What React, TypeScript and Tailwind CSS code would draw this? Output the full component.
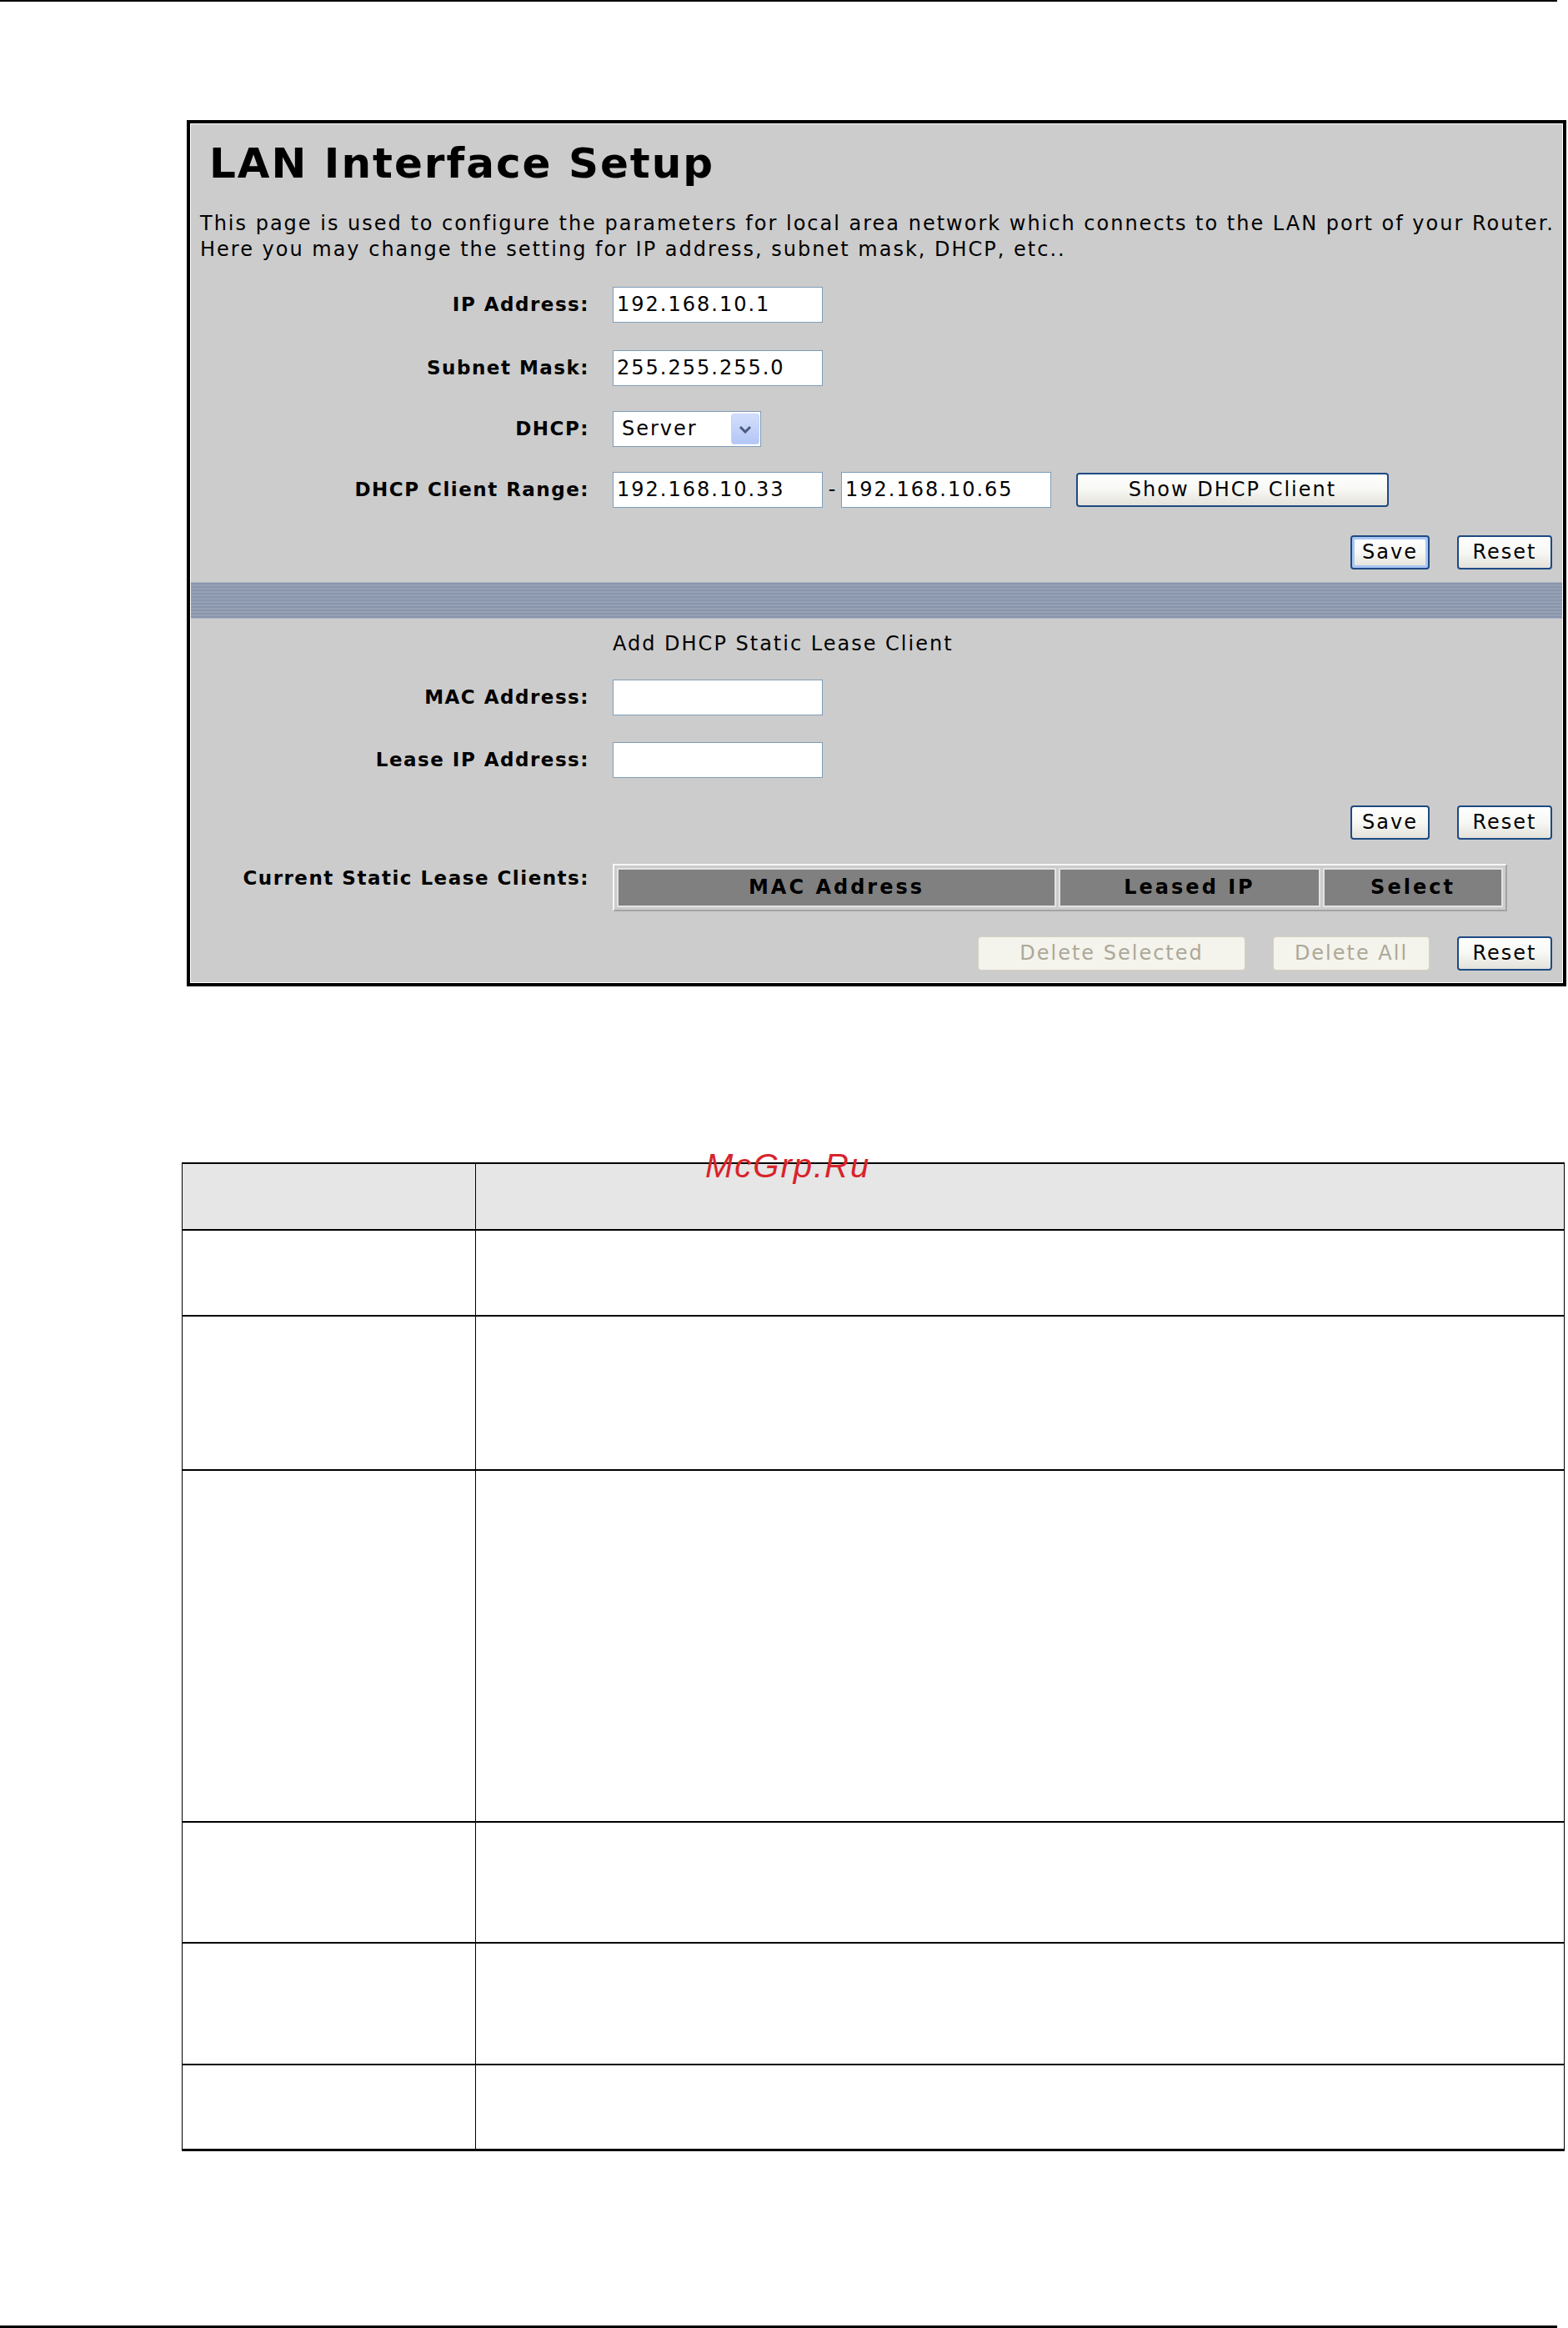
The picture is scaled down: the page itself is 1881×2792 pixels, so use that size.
import React from 'react';

const labelCls = "w-[478px] shrink-0 text-right text-[23px] font-bold tracking-[1.5px]";

function TextInput({ value, w = 'w-[252px]' }: { value?: string; w?: string }) {
  return (
    <div className={`${w} h-[43px] border border-[#7f9db9] bg-white pl-[4px] flex items-center tracking-[2px] text-black`}>
      {value}
    </div>
  );
}

function XpButton({
  label,
  w,
  isDefault,
  disabled,
}: {
  label: string;
  w: string;
  isDefault?: boolean;
  disabled?: boolean;
}) {
  if (disabled) {
    return (
      <div className={`${w} h-[41px] rounded-[4px] border border-[#d4d0c0] bg-[#f4f3ec] text-[#aca899] flex items-center justify-center tracking-[2px]`}>
        {label}
      </div>
    );
  }
  return (
    <div
      className={`${w} h-[41px] rounded-[4px] border-2 border-[#1d4a83] bg-gradient-to-b from-white via-[#f7f7f4] to-[#e3e2da] text-black flex items-center justify-center tracking-[2px] ${
        isDefault ? 'shadow-[inset_0_0_0_3px_#a9c6f3]' : ''
      }`}
    >
      {label}
    </div>
  );
}

function Row({ label, children, top }: { label: string; children: React.ReactNode; top: string }) {
  return (
    <div className={`flex items-center ${top}`}>
      <div className={labelCls}>{label}</div>
      <div className="ml-[28px] flex items-center">{children}</div>
    </div>
  );
}

function LanSetupPanel() {
  return (
    <div className="ml-[224px] w-[1655px] border-[4px] border-black">
      <div className="border border-white bg-[#cccccc] pb-[14px] text-[24px] leading-[31px] text-black">
        <h1 className="ml-[22px] mt-[17px] text-[50px] leading-[60px] font-bold tracking-[2px] text-black">
          LAN Interface Setup
        </h1>
        <p className="ml-[11px] mt-[27px] tracking-[2px]">
          This page is used to configure the parameters for local area network which connects to the LAN port of your Router.
          <br />
          Here you may change the setting for IP address, subnet mask, DHCP, etc..
        </p>

        <Row label="IP Address:" top="mt-[29px]">
          <TextInput value="192.168.10.1" />
        </Row>
        <Row label="Subnet Mask:" top="mt-[33px]">
          <TextInput value="255.255.255.0" />
        </Row>
        <Row label="DHCP:" top="mt-[30px]">
          <div className="w-[178px] h-[43px] border border-[#7f9db9] bg-white flex items-center justify-between pl-[10px] pr-[1px] tracking-[2px]">
            <span>Server</span>
            <div className="w-[34px] h-[37px] rounded-[3px] bg-gradient-to-b from-[#d3defc] to-[#b3c6f5] border border-[#c5d3f7] flex items-center justify-center">
              <svg width="16" height="10" viewBox="0 0 16 10">
                <path d="M2 2 L8 8 L14 2" fill="none" stroke="#4b5b80" strokeWidth="3" />
              </svg>
            </div>
          </div>
        </Row>
        <Row label="DHCP Client Range:" top="mt-[30px]">
          <TextInput value="192.168.10.33" />
          <span className="w-[22px] text-center">-</span>
          <TextInput value="192.168.10.65" />
          <div className="ml-[30px]">
            <XpButton label="Show DHCP Client" w="w-[375px]" />
          </div>
        </Row>

        <div className="mt-[33px] flex justify-end gap-[33px] pr-[12px]">
          <XpButton label="Save" w="w-[95px]" isDefault />
          <XpButton label="Reset" w="w-[114px]" />
        </div>

        <div className="mt-[15px] h-[44px] border-y border-[#adb5c4] bg-[repeating-linear-gradient(to_bottom,#8995ab_0px,#8995ab_2px,#96a1b5_2px,#96a1b5_4px)]" />

        <div className="mt-[15px] ml-[506px] tracking-[2px]">Add DHCP Static Lease Client</div>

        <Row label="MAC Address:" top="mt-[27px]">
          <TextInput />
        </Row>
        <Row label="Lease IP Address:" top="mt-[32px]">
          <TextInput />
        </Row>

        <div className="mt-[33px] flex justify-end gap-[33px] pr-[12px]">
          <XpButton label="Save" w="w-[95px]" />
          <XpButton label="Reset" w="w-[114px]" />
        </div>

        <div className="mt-[29px] flex items-start">
          <div className={`${labelCls} mt-[2px]`}>Current Static Lease Clients:</div>
          <div className="ml-[28px] w-[1073px] h-[57px] border-2 border-t-[#f6f6f6] border-l-[#f6f6f6] border-r-[#a3a3a3] border-b-[#a3a3a3] p-[3px] flex gap-[3px] font-bold tracking-[3px]">
            <div className="w-[527px] border-2 border-[#e2e2e2] bg-[#808080] flex items-center justify-center">MAC Address</div>
            <div className="w-[314px] border-2 border-[#e2e2e2] bg-[#808080] flex items-center justify-center">Leased IP</div>
            <div className="flex-1 border-2 border-[#e2e2e2] bg-[#808080] flex items-center justify-center">Select</div>
          </div>
        </div>

        <div className="mt-[30px] flex justify-end gap-[33px] pr-[12px]">
          <XpButton label="Delete Selected" w="w-[321px]" disabled />
          <XpButton label="Delete All" w="w-[188px]" disabled />
          <XpButton label="Reset" w="w-[114px]" />
        </div>
      </div>
    </div>
  );
}

const rowHeights = [80, 103, 185, 422, 145, 146, 103];

export default function App() {
  return (
    <div className="relative w-[1881px] h-[2792px] bg-white flex flex-col font-['DejaVu_Sans',sans-serif]">
      <div className="w-[1868px] h-[2px] bg-black" />
      <div className="mt-[142px]">
        <LanSetupPanel />
      </div>

      <div className="mt-[211px] ml-[218px] w-[1659px] border-t-2 border-l border-r border-black">
        {rowHeights.map((h, i) => (
          <div
            key={i}
            style={{ height: h }}
            className={`flex ${i === rowHeights.length - 1 ? 'border-b-[3px]' : 'border-b-2'} border-black ${
              i === 0 ? 'bg-[#e6e6e6]' : 'bg-white'
            }`}
          >
            <div className="w-[352px] border-r border-black" />
            <div className="flex-1" />
          </div>
        ))}
      </div>

      <div className="absolute left-[846px] top-[1378px] text-[40px] leading-[40px] italic tracking-[2px] text-[#d8232a] font-['Liberation_Sans',sans-serif]">
        McGrp.Ru
      </div>

      <div className="mt-auto w-[1868px] h-[3px] bg-black" />
    </div>
  );
}
